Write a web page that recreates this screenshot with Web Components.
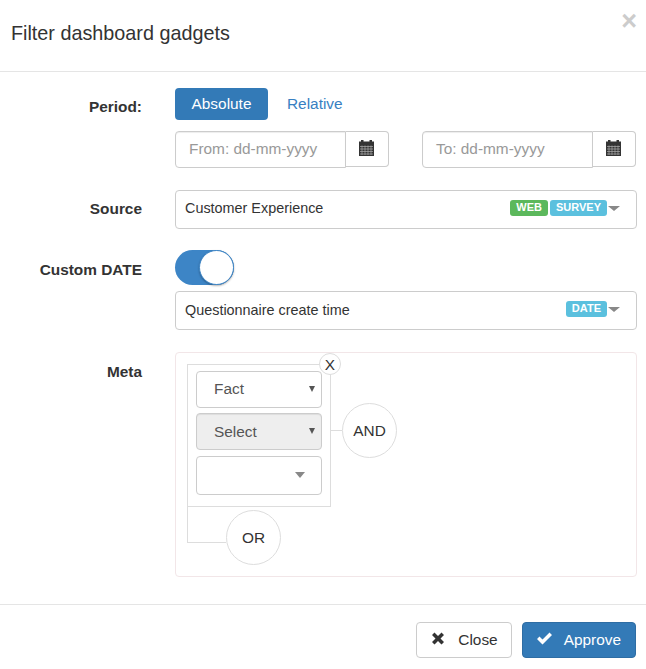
<!DOCTYPE html>
<html>
<head>
<meta charset="utf-8">
<title>Filter dashboard gadgets</title>
<style>
  html, body { margin: 0; background: #fff; }
  body { font-family: "Liberation Sans", Arial, sans-serif; font-size: 15.4px; color: #333; }
</style>
</head>
<body>

<filter-dialog heading="Filter dashboard gadgets">
  <form-row label="Period:" top="10" gap="22">
    <period-tabs></period-tabs>
    <div style="display:flex;justify-content:space-between;margin-top:11px;width:461px">
      <date-input placeholder="From: dd-mm-yyyy"></date-input>
      <date-input placeholder="To: dd-mm-yyyy"></date-input>
    </div>
  </form-row>
  <form-row label="Source" top="10" gap="21">
    <combo-select text="Customer Experience" style="--text-lift:-2px">
      <tag-label color="#5cb85c">WEB</tag-label>
      <tag-label color="#5bc0de">SURVEY</tag-label>
    </combo-select>
  </form-row>
  <form-row label="Custom DATE" top="11" gap="22">
    <toggle-switch></toggle-switch>
    <combo-select text="Questionnaire create time" style="margin-top:6px">
      <tag-label color="#5bc0de">DATE</tag-label>
    </combo-select>
  </form-row>
  <form-row label="Meta" top="11" gap="22">
    <meta-builder></meta-builder>
  </form-row>
  <dialog-button slot="footer" icon="close" label="Close"></dialog-button>
  <dialog-button slot="footer" icon="check" label="Approve" primary></dialog-button>
</filter-dialog>

<script>
class FilterDialog extends HTMLElement {
    connectedCallback() {
        this.attachShadow({ mode: 'open' });
        this.shadowRoot.innerHTML = `
            <style>
                :host { display: block; width: 646px; height: 669px; position: relative; overflow: hidden; }
                header { height: 71px; border-bottom: 1px solid #e5e5e5; display: flex; align-items: center; padding-left: 11px; }
                h4 { margin: 0; font-size: 19.8px; font-weight: 400; color: #333; position: relative; top: -2px; }
                .x { position: absolute; top: 4px; right: 9px; font-size: 27px; line-height: 34px; font-weight: 700; color: #ccc; }
                main { height: 533px; box-sizing: border-box; border-bottom: 1px solid #e5e5e5; padding-top: 16px; }
                footer { display: flex; justify-content: flex-end; gap: 10px; padding: 17px 10px 0 0; }
            </style>
            <header><h4>${this.getAttribute('heading')}</h4></header>
            <span class="x">×</span>
            <main><slot></slot></main>
            <footer><slot name="footer"></slot></footer>
        `;
    }
}

class FormRow extends HTMLElement {
    connectedCallback() {
        this.attachShadow({ mode: 'open' });
        this.shadowRoot.innerHTML = `
            <style>
                :host { display: flex; margin-bottom: ${this.getAttribute('gap')}px; }
                label { width: 142px; text-align: right; font-weight: 700; font-size: 15.4px; line-height: 17px; padding-top: ${this.getAttribute('top')}px; color: #333; flex: none; box-sizing: border-box; }
                div { margin-left: 33px; width: 462px; }
            </style>
            <label>${this.getAttribute('label')}</label>
            <div><slot></slot></div>
        `;
    }
}

class PeriodTabs extends HTMLElement {
    connectedCallback() {
        this.attachShadow({ mode: 'open' });
        this.shadowRoot.innerHTML = `
            <style>
                :host { display: flex; height: 32px; font-size: 15.4px; line-height: 32px; }
                span { border-radius: 4px; }
                .on { background: #337ab7; color: #fff; width: 93px; text-align: center; }
                .off { color: #3880c2; padding-left: 19px; }
            </style>
            <span class="on">Absolute</span><span class="off">Relative</span>
        `;
    }
}

class DateInput extends HTMLElement {
    connectedCallback() {
        this.attachShadow({ mode: 'open' });
        this.shadowRoot.innerHTML = `
            <style>
                :host { display: flex; width: 214px; height: 37px; }
                .field { width: 171px; height: 37px; box-sizing: border-box; border: 1px solid #ccc; border-radius: 4px 0 0 4px; padding-left: 13px; line-height: 34px; font-size: 15.4px; color: #999; box-shadow: inset 0 1px 1px rgba(0,0,0,.075); }
                .addon { width: 43px; height: 36px; box-sizing: border-box; border: 1px solid #ccc; border-left: 0; border-radius: 0 4px 4px 0; display: flex; align-items: center; justify-content: center; padding: 0 2px 3px 0; }
                svg { display: block; }
            </style>
            <div class="field">${this.getAttribute('placeholder')}</div>
            <div class="addon">
                <svg width="15" height="16" viewBox="0 0 15 16">
                    <path fill="#333" d="M2 0h2.500v1.500h6V0H13v1.500h2V16H0V1.500h2z"/>
                    <path stroke="#aaa" stroke-width=".7" fill="none" d="M1 6.500h13M1 9h13M1 11.500h13M1 14h13M3 5.500v9.500M6 5.500v9.500M9 5.500v9.500M12 5.500v9.500"/>
                </svg>
            </div>
        `;
    }
}

class TagLabel extends HTMLElement {
    connectedCallback() {
        this.attachShadow({ mode: 'open' });
        this.shadowRoot.innerHTML = `
            <style>
                :host { display: block; height: 16px; line-height: 14px; padding: 0 6px; border-radius: 3px; background: ${this.getAttribute('color')}; color: #fff; font-size: 11px; font-weight: 700; }
            </style>
            <slot></slot>
        `;
    }
}

class ComboSelect extends HTMLElement {
    connectedCallback() {
        this.attachShadow({ mode: 'open' });
        this.shadowRoot.innerHTML = `
            <style>
                :host { display: flex; align-items: center; height: 39px; box-sizing: border-box; border: 1px solid #ccc; border-radius: 4px; padding: 0 16px 0 9px; font-size: 14.4px; color: #333; }
                .text { flex: 1; position: relative; top: var(--text-lift, -1px); }
                .tags { display: flex; gap: 2px; align-self: flex-start; margin-top: 9px; }
                .caret { width: 0; height: 0; border: solid transparent; border-width: 5px 6px 0; border-top-color: #888; margin: -3px 0 0 1px; }
            </style>
            <span class="text">${this.getAttribute('text')}</span>
            <div class="tags"><slot></slot></div>
            <span class="caret"></span>
        `;
    }
}

class ToggleSwitch extends HTMLElement {
    connectedCallback() {
        this.attachShadow({ mode: 'open' });
        this.shadowRoot.innerHTML = `
            <style>
                :host { display: block; width: 59px; height: 35px; border-radius: 18px; background: #3d85c6; position: relative; }
                i { position: absolute; right: 0; top: 0; width: 35px; height: 35px; box-sizing: border-box; border-radius: 50%; background: #fff; border: 1px solid #3d85c6; box-shadow: 0 1px 2px rgba(0,0,0,.3); }
            </style>
            <i></i>
        `;
    }
}

class SmallSelect extends HTMLElement {
    connectedCallback() {
        this.attachShadow({ mode: 'open' });
        const arrow = this.hasAttribute('wide')
            ? '<span class="caret"></span>'
            : '<span class="arrow"></span>';
        this.shadowRoot.innerHTML = `
            <style>
                :host { display: flex; align-items: center; width: 126px; height: ${this.getAttribute('h') || 37}px; box-sizing: border-box; border: 1px solid #ccc; border-radius: 4px; padding: 0 0 1px 17px; font-size: 15.4px; color: #555; position: relative; flex: none; }
                :host([disabled]) { background: #eee; box-shadow: inset 0 1px 1px rgba(0,0,0,.075); padding-bottom: 0; }
                .arrow { position: absolute; right: 6px; top: 14px; border: solid transparent; border-width: 6px 3px 0; border-top-color: #555; }
                .caret { position: absolute; right: 16px; top: 15px; border: solid transparent; border-width: 6px 5.5px 0; border-top-color: #888; }
            </style>
            <slot></slot>${arrow}
        `;
    }
}

class CircleNode extends HTMLElement {
    connectedCallback() {
        this.attachShadow({ mode: 'open' });
        this.shadowRoot.innerHTML = `
            <style>
                :host { display: flex; align-items: center; justify-content: center; width: 55px; height: 55px; box-sizing: border-box; border: 1px solid #ddd; border-radius: 50%; background: #fff; font-size: 15.4px; color: #333; flex: none; }
            </style>
            <slot></slot>
        `;
    }
}

class MetaBuilder extends HTMLElement {
    connectedCallback() {
        this.attachShadow({ mode: 'open' });
        this.shadowRoot.innerHTML = `
            <style>
                :host { display: block; height: 225px; box-sizing: border-box; border: 1px solid #f2e6e8; border-radius: 4px; padding: 11px; }
                .top { display: flex; align-items: flex-start; }
                .group { position: relative; width: 144px; height: 143px; box-sizing: border-box; border: 1px solid #ddd; padding: 6px 8px; display: flex; flex-direction: column; }
                .group small-select + small-select { margin-top: 5px; }
                .group small-select[wide] { margin-top: 6px; }
                .remove { position: absolute; top: -12px; right: -11px; width: 22px; height: 22px; box-sizing: border-box; border: 1px solid #ddd; border-radius: 50%; background: #fff; text-align: center; line-height: 22px; font-size: 15.4px; color: #333; }
                .link { width: 11px; height: 1px; background: #ddd; flex: none; margin-top: 66px; }
                .top circle-node { margin-top: 39px; }
                .bottom { display: flex; align-items: flex-start; margin-top: 3px; }
                .elbow { width: 39px; height: 36px; margin-top: -3px; box-sizing: border-box; border: 1px solid #ddd; border-top: 0; border-right: 0; }
            </style>
            <div class="top">
                <div class="group">
                    <span class="remove">X</span>
                    <small-select>Fact</small-select>
                    <small-select disabled>Select</small-select>
                    <small-select wide h="39"></small-select>
                </div>
                <span class="link"></span>
                <circle-node>AND</circle-node>
            </div>
            <div class="bottom">
                <span class="elbow"></span>
                <circle-node>OR</circle-node>
            </div>
        `;
    }
}

class DialogButton extends HTMLElement {
    connectedCallback() {
        this.attachShadow({ mode: 'open' });
        const icon = this.getAttribute('icon') === 'close'
            ? '<path d="M4.500 .5 L8 4 L11.500 .5 L14 3 L10.500 6.500 L14 10 L11.500 12.500 L8 9 L4.500 12.500 L2 10 L5.500 6.500 L2 3 Z"/>'
            : '<path d="M1 7 L3.500 4.500 L6.500 7.500 L13.500 .5 L16 3 L6.500 12.500 Z"/>';
        this.shadowRoot.innerHTML = `
            <style>
                :host { display: flex; align-items: center; height: 36px; box-sizing: border-box; border: 1px solid #ccc; border-radius: 4px; background: #fff; color: #333; font-size: 15.4px; padding: 0 13px; gap: 12px; }
                :host([primary]) { background: #337ab7; border-color: #2e6da4; color: #fff; padding-right: 14px; }
                svg { display: block; fill: currentColor; flex: none; margin-bottom: 4px; }
            </style>
            <svg width="16" height="13" viewBox="0 0 16 13">${icon}</svg>
            <span>${this.getAttribute('label')}</span>
        `;
    }
}

customElements.define('filter-dialog', FilterDialog);
customElements.define('form-row', FormRow);
customElements.define('period-tabs', PeriodTabs);
customElements.define('date-input', DateInput);
customElements.define('tag-label', TagLabel);
customElements.define('combo-select', ComboSelect);
customElements.define('toggle-switch', ToggleSwitch);
customElements.define('small-select', SmallSelect);
customElements.define('circle-node', CircleNode);
customElements.define('meta-builder', MetaBuilder);
customElements.define('dialog-button', DialogButton);
</script>
</body>
</html>
